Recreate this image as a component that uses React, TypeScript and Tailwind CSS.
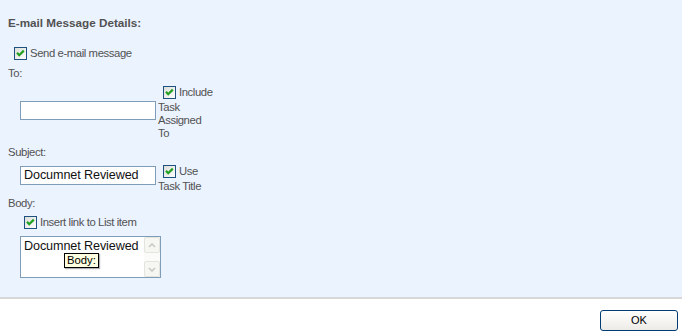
import React from 'react'

function Check({ id }: { id: string }) {
  return (
    <svg width="13" height="13" viewBox="0 0 13 13" className="shrink-0 block">
      <defs>
        <linearGradient id={id} x1="0" y1="0" x2="1" y2="1">
          <stop offset="0" stopColor="#dcdcd7" />
          <stop offset="1" stopColor="#ffffff" />
        </linearGradient>
      </defs>
      <rect x="0.5" y="0.5" width="12" height="12" fill={`url(#${id})`} stroke="#1c5180" />
      <polyline points="3,5.8 5.2,8.2 9.8,3.6" fill="none" stroke="#21a121" strokeWidth="2.2" />
    </svg>
  )
}

function ScrollBtn({ up }: { up?: boolean }) {
  return (
    <div className="w-[16px] h-[16px] border border-[#e4e4de] rounded-[2px] bg-[#f6f6f2] flex items-center justify-center">
      <svg width="8" height="5" viewBox="0 0 8 5">
        <polyline
          points={up ? '1,4 4,1 7,4' : '1,1 4,4 7,1'}
          fill="none"
          stroke="#c9c9c3"
          strokeWidth="1.6"
        />
      </svg>
    </div>
  )
}

export default function App() {
  const font = { fontFamily: '"Liberation Sans", Arial, sans-serif' }

  return (
    <div className="w-[682px] h-[335px] flex flex-col bg-white overflow-hidden" style={font}>
      <div className="h-[297px] bg-[#ebf3ff] pl-[8px] text-[#525252] text-[11.3px] leading-[13px] tracking-[-0.4px]">
        <div className="pt-[16px] font-bold text-[11.7px] leading-[13px] tracking-normal">
          E-mail Message Details:
        </div>

        <div className="mt-[16px] h-[17px] flex items-center pl-[6px]">
          <Check id="c1" />
          <span className="ml-[3px]">Send e-mail message</span>
        </div>

        <div className="mt-[5px]">To:</div>

        <div className="mt-[4px] flex items-start pl-[12px]">
          <div className="mt-[17px] w-[136px] h-[19px] border border-[#7f9db9] bg-white" />
          <div className="ml-[2px] w-[58px]">
            <div className="h-[17px] flex items-center pl-[5px]">
              <Check id="c2" />
              <span className="ml-[3px]">Include</span>
            </div>
            <div>Task</div>
            <div>Assigned</div>
            <div>To</div>
          </div>
        </div>

        <div className="mt-[6px]">Subject:</div>

        <div className="mt-[4px] flex items-start pl-[12px]">
          <div className="mt-[3px] w-[136px] h-[19px] border border-[#7f9db9] bg-white pl-[3px] text-[12.6px] leading-[17px] text-[#111] tracking-[-0.1px]">
            Documnet Reviewed
          </div>
          <div className="ml-[2px] w-[58px]">
            <div className="h-[17px] flex items-center pl-[5px]">
              <Check id="c3" />
              <span className="ml-[3px]">Use</span>
            </div>
            <div>Task Title</div>
          </div>
        </div>

        <div className="mt-[4px]">Body:</div>

        <div className="mt-[4px] h-[17px] flex items-center pl-[16px]">
          <Check id="c4" />
          <span className="ml-[3px]">Insert link to List item</span>
        </div>

        <div className="mt-[5px] ml-[12px] relative w-[141px] h-[42px] border border-[#7f9db9] bg-white flex">
          <div className="flex-1 pl-[3px] pt-[1px] text-[12.6px] leading-[16px] text-[#111] tracking-[-0.1px]">
            Documnet Reviewed
          </div>
          <div className="w-[16px] flex flex-col justify-between bg-[#fbfbf9]">
            <ScrollBtn up />
            <ScrollBtn />
          </div>
          <div className="absolute left-[43px] top-[16px] h-[15px] px-[2px] border border-black bg-[#ffffe1] text-black text-[11.3px] leading-[13px] tracking-normal shadow-[1px_1px_1px_rgba(0,0,0,0.3)]">
            Body:
          </div>
        </div>
      </div>

      <div className="h-[2px] bg-[#d8d8d8]" />

      <div className="flex justify-end pr-[4px] pt-[11px]">
        <button className="w-[78px] h-[21px] border border-[#003c74] rounded-[3px] bg-gradient-to-b from-white to-[#ecebe6] text-black text-[11px] leading-[19px]">
          OK
        </button>
      </div>
    </div>
  )
}
